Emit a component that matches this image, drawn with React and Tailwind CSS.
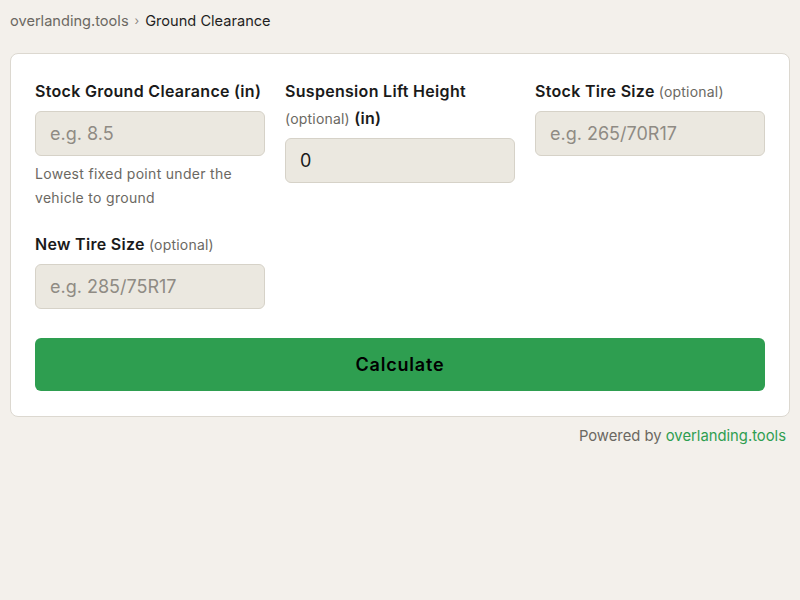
export default function App() {
    const font = { fontFamily: 'Inter, "Noto Sans", sans-serif' };

    return (
        <div className="min-h-[600px] bg-[#f3f0eb] px-[10px] pt-[10px] text-[#1a1a1a]" style={font}>
            <nav className="flex items-center gap-[6px] text-[14.6px] leading-[22px]">
                <span className="text-[#6b6862]">overlanding.tools</span>
                <span className="text-[12px] text-[#8a867e]">›</span>
                <span className="text-[#1f1f1f]">Ground Clearance</span>
            </nav>

            <div className="mt-[21px] rounded-lg border border-[#dcd8d0] bg-white px-6 pt-[25px] pb-[25px]">
                <div className="grid grid-cols-3 gap-x-5 gap-y-[22px]">
                    <Field label="Stock Ground Clearance (in)" placeholder="e.g. 8.5" help="Lowest fixed point under the vehicle to ground" />
                    <div>
                        <label className="-mt-px block text-[16px] font-semibold leading-[27px] tracking-[0.3px]">
                            Suspension Lift Height <span className="text-[14px] leading-none font-normal tracking-[0.2px] text-[#6b6862]">(optional)</span> (in)
                        </label>
                        <input
                            defaultValue="0"
                            className="mt-[6px] h-[45px] w-full rounded-md border border-[#d6d2c8] bg-[#ebe8e0] px-[14px] text-[18px] text-[#1a1a1a] outline-none"
                        />
                    </div>
                    <Field label="Stock Tire Size" optional placeholder="e.g. 265/70R17" />
                    <Field label="New Tire Size" optional placeholder="e.g. 285/75R17" />
                </div>

                <button className="mt-[29px] h-[53px] w-full rounded-md bg-[#2e9e50] text-[18px] font-semibold tracking-[0.8px] text-black">
                    Calculate
                </button>
            </div>

            <p className="mt-[8px] pr-1 text-right text-[14.8px] leading-[22px] text-[#6b6862]">
                Powered by <span className="text-[#2e9e50]">overlanding.tools</span>
            </p>
        </div>
    );
}

function Field({ label, optional, placeholder, help }) {
    return (
        <div>
            <label className="block whitespace-nowrap text-[16px] font-semibold leading-6 tracking-[0.3px]">
                {label}
                {optional && <span className="text-[14px] leading-none font-normal tracking-[0.2px] text-[#6b6862]"> (optional)</span>}
            </label>
            <input
                placeholder={placeholder}
                className="mt-2 h-[45px] w-full rounded-md border border-[#d6d2c8] bg-[#ebe8e0] px-[14px] text-[18px] text-[#1a1a1a] placeholder:text-[#8f8b84] outline-none"
            />
            {help && <p className="mt-[6px] text-[14px] leading-6 tracking-[0.3px] text-[#6b6862]">{help}</p>}
        </div>
    );
}
